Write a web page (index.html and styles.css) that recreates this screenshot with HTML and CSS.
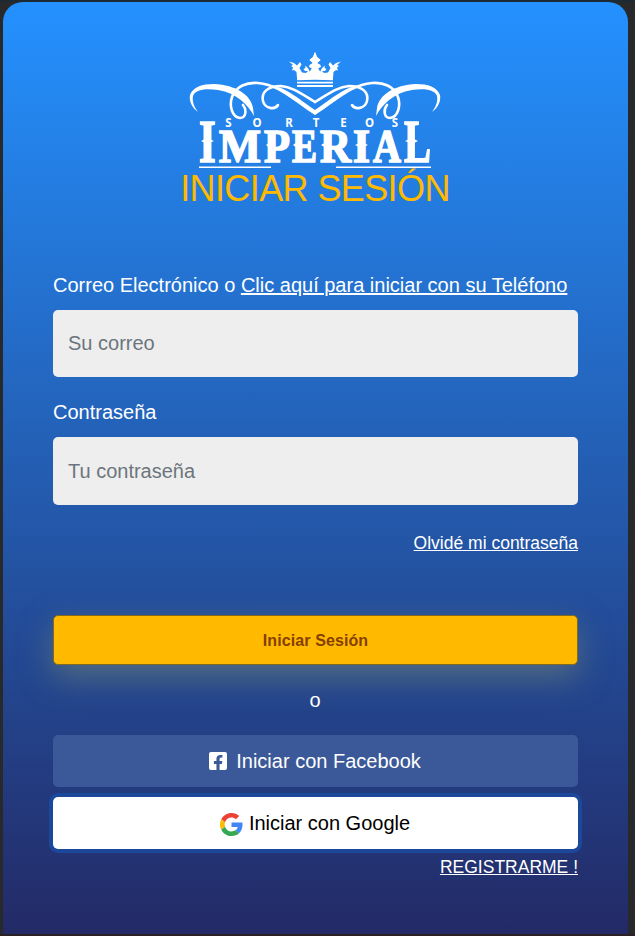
FILE: index.html
```html
<!DOCTYPE html>
<html lang="es">
<head>
<meta charset="utf-8">
<title>Iniciar sesión</title>
<link rel="stylesheet" href="styles.css">
</head>
<body>
<main class="card">
  <header class="brand">
    <svg class="logo" viewBox="180 45 270 125" role="img" aria-label="Sorteos Imperial">
      <defs>
        <g id="half">
          <path class="fill" d="M198 112C191 107 189 100 190 95C193 87 202 84 214 84C236 85 251 95 253 108L254 116C248 105 237 93 218 90C204 88 195 90 193 96C192 101 194 107 198 112Z"/>
          <path class="curl" d="M243 105C247 110 246 118 240 118C232 117 229 106 232 97C236 86 247 82 258 83C279 85 291 98 315 113"/>
          <path class="fill" d="M268 85C285 86 297 98 315 110V115C295 102 283 90 268 85Z"/>
          <path class="curl" d="M278 105C275 110 265 109 263 101C261 92 268 86 281 86C293 87 303 95 315 102"/>
          <path class="fill" d="M315 52L317 57L320.500 60L317 63L320.500 65L321 67L318 68L321 73L325 76V78H297L296.500 72L294 70L292 70.500L293 67.500L291 66L293 65L289 61.500L294 63L297 65.500L300 62L301.500 64.500L299.500 68L302 72.500L306 73L308 71L305 71L303.500 69L305.500 68L305 65.500L308 68L310 72L312.500 69L310 67V65L313 63L309.500 60L313 57Z"/>
        </g>
      </defs>
      <use href="#half"/>
      <use href="#half" transform="matrix(-1 0 0 1 630 0)"/>
      <path class="fill" d="M297 77.500Q315 76 333 77.500V80.300Q315 79 297 80.300ZM297 81.700H333V83.600H297ZM297 85H333V87H297Z"/>
      <g class="small">
        <text x="228.500" y="127">S</text><text x="257" y="127">O</text><text x="289" y="127">R</text><text x="316" y="127">T</text><text x="343.500" y="127">E</text><text x="369.500" y="127">O</text><text x="395" y="127">S</text>
      </g>
      <g class="name">
        <text class="big" x="199" y="161.500" textLength="17" lengthAdjust="spacingAndGlyphs">I</text>
        <text x="219" y="161.500" textLength="42" lengthAdjust="spacingAndGlyphs">M</text>
        <text x="264" y="161.500" textLength="26" lengthAdjust="spacingAndGlyphs">P</text>
        <text x="292" y="161.500" textLength="25" lengthAdjust="spacingAndGlyphs">E</text>
        <text x="320" y="161.500" textLength="31" lengthAdjust="spacingAndGlyphs">R</text>
        <text x="353" y="161.500" textLength="17" lengthAdjust="spacingAndGlyphs">I</text>
        <text x="373" y="161.500" textLength="28" lengthAdjust="spacingAndGlyphs">A</text>
        <text class="big" x="404" y="161.500" textLength="27" lengthAdjust="spacingAndGlyphs">L</text>
      </g>
      <path class="fill" d="M201 141L207 138L214 141L207 144ZM266 145L270 142L275 145L270 148ZM293 145L297 142V148ZM321 145L326 142V148ZM355 145L361.500 142L368 145L361.500 148ZM405 141L412 138L418 141L412 144Z"/>
      <path class="fill" d="M199 166.500H271V168H199ZM336 166.500H431V168H336Z"/>
    </svg>
    <h1 class="title">INICIAR SESIÓN</h1>
  </header>
  <form class="form">
    <label class="label" for="mail">Correo Electrónico o <a href="#">Clic aquí para iniciar con su Teléfono</a></label>
    <input class="field" id="mail" type="email" placeholder="Su correo">
    <label class="label second" for="pass">Contraseña</label>
    <input class="field tall" id="pass" type="password" placeholder="Tu contraseña">
    <a class="link forgot" href="#">Olvidé mi contraseña</a>
    <button class="submit" type="button">Iniciar Sesión</button>
    <p class="or">o</p>
    <button class="social facebook" type="button">
      <svg class="fb" viewBox="0 0 448 448"><path d="M400 0H48A48 48 0 0 0 0 48v352a48 48 0 0 0 48 48h137.250V295.690h-63V224h63v-54.640c0-62.150 37-96.480 93.670-96.480 27.140 0 55.520 4.840 55.520 4.840v61h-31.270c-30.810 0-40.420 19.120-40.420 38.730V224h68.780l-11 71.690h-57.780V448H400a48 48 0 0 0 48-48V48a48 48 0 0 0-48-48z"/></svg>
      <span>Iniciar con Facebook</span>
    </button>
    <button class="social google" type="button">
      <svg class="gg" viewBox="0 0 48 48"><path fill="#EA4335" d="M24 9.500c3.540 0 6.710 1.220 9.210 3.600l6.850-6.850C35.900 2.380 30.470 0 24 0 14.620 0 6.510 5.380 2.560 13.220l7.980 6.190C12.430 13.720 17.740 9.500 24 9.500z"/><path fill="#4285F4" d="M46.980 24.550c0-1.570-.15-3.090-.38-4.550H24v9.020h12.940c-.58 2.960-2.260 5.480-4.780 7.180l7.730 6c4.510-4.180 7.090-10.360 7.090-17.650z"/><path fill="#FBBC05" d="M10.530 28.590A14.500 14.500 0 0 1 9.770 24c0-1.600.27-3.140.76-4.590l-7.980-6.190A23.900 23.900 0 0 0 0 24c0 3.880.92 7.540 2.560 10.780z"/><path fill="#34A853" d="M24 48c6.480 0 11.930-2.130 15.890-5.810l-7.730-6c-2.150 1.450-4.920 2.300-8.160 2.300-6.260 0-11.570-4.220-13.470-9.910l-7.980 6.190C6.510 42.620 14.620 48 24 48z"/></svg>
      <span>Iniciar con Google</span>
    </button>
    <a class="link register" href="#">REGISTRARME !</a>
  </form>
</main>
</body>
</html>
```
FILE: styles.css
```css
* { box-sizing: border-box; }
html { height: 100%; }
body {
  margin: 0;
  height: 936px;
  overflow: hidden;
  padding: 0 7px 0 3px;
  border-top: 2px solid #1c2a33;
  border-bottom: 2px solid #2b2024;
  background: #28292a;
  font-family: "Liberation Sans", Arial, sans-serif;
  color: #fff;
}
.card {
  height: 932px;
  padding: 43px 50px 0;
  border-radius: 20px 20px 0 0;
  background: linear-gradient(#2491ff, #232a66);
}
.brand { display: flex; flex-direction: column; align-items: center; padding-right: 1px; }
.logo { display: block; width: 270px; height: 125px; }
.fill { fill: #fff; }
.curl { fill: none; stroke: #fff; stroke-width: 2.6; stroke-linecap: round; }
.small { font: bold 11.5px "Noto Sans", sans-serif; fill: #fff; text-anchor: middle; }
.name { font: bold 47px "Liberation Serif", serif; fill: #fff; stroke: #fff; stroke-width: 1.6; }
.big { font-size: 61px; }
.title { margin: -3px 0 0; font-size: 36px; letter-spacing: -.6px; line-height: 43px; font-weight: 400; color: #ffba00; white-space: nowrap; }
.form { display: flex; flex-direction: column; margin-top: 60px; }
.label { font-size: 20px; line-height: 30px; white-space: nowrap; }
.label a, .link { color: #fff; text-decoration: underline; }
.second { margin-top: 20px; }
.field {
  width: 100%;
  height: 67px;
  margin: 10px 0 0;
  padding: 0 15px;
  border: 0;
  border-radius: 5px;
  background: #eee;
  font: 20px "Liberation Sans", Arial, sans-serif;
}
.tall { height: 68px; padding-top: 1px; }
.field::placeholder { color: #6c757d; opacity: 1; }
.link { align-self: flex-end; font-size: 17.5px; line-height: 27px; }
.forgot { margin-top: 25px; }
.submit {
  height: 50px;
  margin: 58px 0 0;
  padding: 2px 0 0;
  border: 1px solid #806a20;
  border-radius: 5px;
  background: #ffba00;
  color: #853f00;
  font: bold 16px "Liberation Sans", Arial, sans-serif;
  letter-spacing: .1px;
  box-shadow: 0 12px 32px rgba(130, 145, 110, .5);
}
.or { margin: 20px 0; padding-right: 1px; text-align: center; font-size: 20px; line-height: 30px; }
.social {
  display: flex;
  align-items: center;
  justify-content: center;
  height: 52px;
  padding: 0 1px 0 0;
  border: 0;
  border-radius: 5px;
  font: 20px "Liberation Sans", Arial, sans-serif;
}
.facebook { gap: 9px; background: #3b5998; color: #fff; }
.fb { width: 18px; height: 18px; fill: #fff; }
.google { gap: 6px; margin-top: 10px; background: #fff; color: #000; box-shadow: 0 0 0 4px #1b489b; }
.gg { width: 23px; height: 23px; margin-top: 3px; }
.register { margin-top: 5px; }
```
